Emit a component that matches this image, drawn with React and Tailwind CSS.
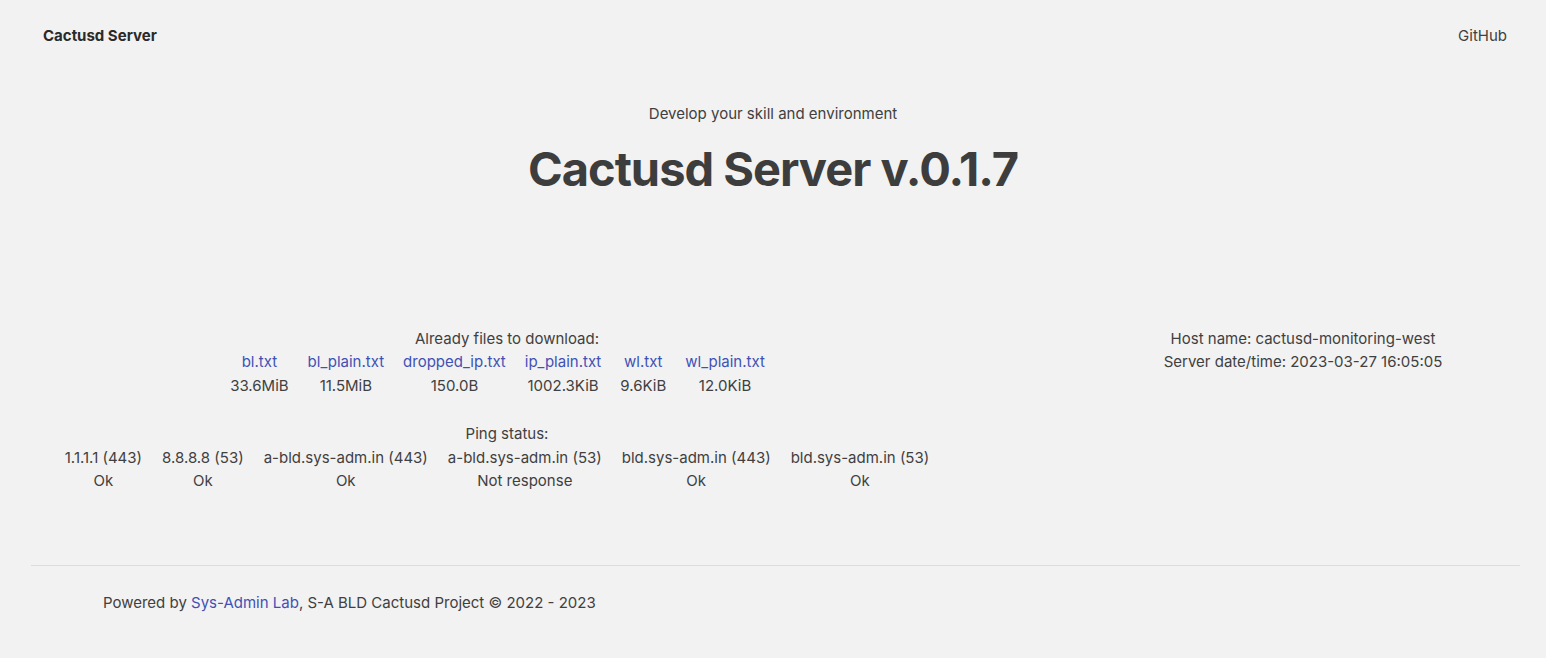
import React from 'react';

const files = [
  { name: 'bl.txt', size: '33.6MiB' },
  { name: 'bl_plain.txt', size: '11.5MiB' },
  { name: 'dropped_ip.txt', size: '150.0B' },
  { name: 'ip_plain.txt', size: '1002.3KiB' },
  { name: 'wl.txt', size: '9.6KiB' },
  { name: 'wl_plain.txt', size: '12.0KiB' },
];

const pings = [
  { host: '1.1.1.1 (443)', status: 'Ok' },
  { host: '8.8.8.8 (53)', status: 'Ok' },
  { host: 'a-bld.sys-adm.in (443)', status: 'Ok' },
  { host: 'a-bld.sys-adm.in (53)', status: 'Not response' },
  { host: 'bld.sys-adm.in (443)', status: 'Ok' },
  { host: 'bld.sys-adm.in (53)', status: 'Ok' },
];

const App = () => {
  return (
    <div className="min-h-screen bg-[#f2f2f2] text-[#404040] font-['Inter',sans-serif] text-[15px]">
      {/* top bar */}
      <header className="flex justify-between items-center px-[43px] pt-[25px] pb-[14px]">
        <div className="font-bold text-[#2a2a2a]">Cactusd Server</div>
        <a href="#" className="mr-[-4px]">GitHub</a>
      </header>

      <div className="text-center mt-[41px]">
        <p className="leading-[22px]">Develop your skill and environment</p>
        <h1 className="text-[47px] font-bold leading-none tracking-[-1px] mt-[20px] text-[#3d3d3d]">Cactusd Server v.0.1.7</h1>
      </div>

      <div className="flex mt-[135px] leading-[23.5px]">
        <div className="w-[1014px] text-center">
          <div>Already files to download:</div>
          <table className="mx-auto">
            <tbody>
              <tr>
                {files.map((f) => (
                  <td key={f.name} className="pr-[19px] text-center">
                    <a href="#" className="text-[#3f51b5]">{f.name}</a>
                  </td>
                ))}
              </tr>
              <tr>
                {files.map((f) => (
                  <td key={f.name} className="pr-[19px] text-center">{f.size}</td>
                ))}
              </tr>
            </tbody>
          </table>

          <div className="mt-[25px]">Ping status:</div>
          <table className="mx-auto">
            <tbody>
              <tr>
                {pings.map((p) => (
                  <td key={p.host} className="pr-[20px] text-center">{p.host}</td>
                ))}
              </tr>
              <tr>
                {pings.map((p) => (
                  <td key={p.host} className="pr-[20px] text-center">{p.status}</td>
                ))}
              </tr>
            </tbody>
          </table>
        </div>
        <div className="flex-1 ml-[46px] text-center">
          <div>Host name: cactusd-monitoring-west</div>
          <div>Server date/time: 2023-03-27 16:05:05</div>
        </div>
      </div>

      <footer className="ml-[31px] mr-[26px] mt-[72px] border-t border-[#dcdcdc] pt-[26px] px-[72px]">
        <p>
          Powered by <a href="#" className="text-[#3f51b5]">Sys-Admin Lab</a>, S-A BLD Cactusd Project © 2022 - 2023
        </p>
      </footer>
    </div>
  );
};

export default App;
